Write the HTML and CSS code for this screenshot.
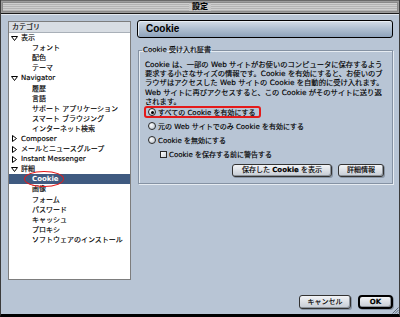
FILE: index.html
```html
<!DOCTYPE html>
<html lang="ja">
<head>
<meta charset="utf-8">
<title>設定</title>
<link rel="stylesheet" href="styles.css">
</head>
<body>
<div class="window">
  <div class="titlebar">
    <div class="stripes"><span class="title">設定</span></div>
  </div>
  <div class="main">
    <div class="tree">
      <div class="tree-head">カテゴリ</div>
      <ul class="tree-list">
        <li class="row l0"><svg class="tri" viewBox="0 0 7 7"><path d="M0.5 1.5 H6.5 L3.5 5.5 Z"/></svg>表示</li>
        <li class="row l1">フォント</li>
        <li class="row l1">配色</li>
        <li class="row l1">テーマ</li>
        <li class="row l0"><svg class="tri" viewBox="0 0 7 7"><path d="M0.5 1.5 H6.5 L3.5 5.5 Z"/></svg>Navigator</li>
        <li class="row l1">履歴</li>
        <li class="row l1">言語</li>
        <li class="row l1">サポート アプリケーション</li>
        <li class="row l1">スマート ブラウジング</li>
        <li class="row l1">インターネット検索</li>
        <li class="row l0"><svg class="tri" viewBox="0 0 7 7"><path d="M1.5 0.5 V6.5 L5.5 3.5 Z"/></svg>Composer</li>
        <li class="row l0"><svg class="tri" viewBox="0 0 7 7"><path d="M1.5 0.5 V6.5 L5.5 3.5 Z"/></svg>メールとニュースグループ</li>
        <li class="row l0"><svg class="tri" viewBox="0 0 7 7"><path d="M1.5 0.5 V6.5 L5.5 3.5 Z"/></svg>Instant Messenger</li>
        <li class="row l0"><svg class="tri" viewBox="0 0 7 7"><path d="M0.5 1.5 H6.5 L3.5 5.5 Z"/></svg>詳細</li>
        <li class="row l1 selected"><span class="sel-text">Cookie<span class="mark"></span></span></li>
        <li class="row l1">画像</li>
        <li class="row l1">フォーム</li>
        <li class="row l1">パスワード</li>
        <li class="row l1">キャッシュ</li>
        <li class="row l1">プロキシ</li>
        <li class="row l1">ソフトウェアのインストール</li>
      </ul>
    </div>
    <div class="pane">
      <div class="pane-header">Cookie</div>
      <fieldset class="group">
        <legend>Cookie 受け入れ証書</legend>
        <p class="desc">Cookie は、一部の Web サイトがお使いのコンピュータに保存するよう<br>要求する小さなサイズの情報です。Cookie を有効にすると、お使いのブ<br>ラウザはアクセスした Web サイトの Cookie を自動的に受け入れます。<br>Web サイトに再びアクセスすると、この Cookie がそのサイトに送り返<br>されます。</p>
        <div class="options">
          <div class="opt highlight"><span class="radio on"></span>すべての Cookie を有効にする</div>
          <div class="opt"><span class="radio"></span>元の Web サイトでのみ Cookie を有効にする</div>
          <div class="opt"><span class="radio"></span>Cookie を無効にする</div>
          <div class="opt sub"><span class="check"></span>Cookie を保存する前に警告する</div>
        </div>
        <div class="group-buttons">
          <button class="btn btn-show">保存した <b>Cookie</b> を表示</button>
          <button class="btn btn-info">詳細情報</button>
        </div>
      </fieldset>
    </div>
  </div>
  <div class="footer">
    <button class="btn btn-cancel">キャンセル</button>
    <button class="btn btn-ok">OK</button>
  </div>
  <svg class="grip" viewBox="0 0 8 8"><path d="M7.5 1.5 L1.5 7.5 M7.5 4 L4 7.5 M7.5 6.5 L6.5 7.5"/></svg>
</div>
</body>
</html>
```
FILE: styles.css
```css
* { box-sizing: border-box; }
html, body { margin: 0; padding: 0; background: #000; }
body {
  font-family: "DejaVu Sans", "Noto Sans CJK JP", sans-serif;
  font-size: 7px;
  color: #000;
  -webkit-text-stroke: 0.15px #000;
}
.window {
  position: relative;
  width: 400px;
  height: 317px;
  background: #b8c5d5;
  border-left: 1px solid #3b3b3b;
  border-right: 1px solid #3b3b3b;
  border-bottom: 3px solid #000;
  display: flex;
  flex-direction: column;
}
.titlebar {
  height: 14px;
  background: #9c9c9c;
  border-top: 1px solid #6a6a6a;
  border-bottom: 1px solid #1a1a1a;
  padding: 1px 1px;
}
.stripes {
  height: 10px;
  border: 1px solid #8a8a8a;
  background: repeating-linear-gradient(#cfcfcf 0, #cfcfcf 1px, #b4b4b4 1px, #b4b4b4 2px);
  display: flex;
  justify-content: center;
  align-items: center;
}
.title {
  background: #c8c8c8;
  padding: 0 3px;
  line-height: 8px;
  font-size: 8px;
  font-weight: bold;
}
.main {
  border-top: 1px solid #e2e8ef;
  padding: 6px 6px 0 7px;
  display: grid;
  grid-template-columns: 123px 1fr;
  column-gap: 6px;
  align-items: start;
}
.tree {
  height: 259px;
  background: #fff;
  border: 1px solid #7d7d7d;
}
.tree-head {
  height: 11px;
  line-height: 10px;
  background: #d8dde3;
  border-bottom: 1px solid #a9b0b8;
  padding-left: 3px;
  color: #000;
}
.tree-list {
  list-style: none;
  margin: 0;
  padding: 0;
}
.row {
  height: 10.1px;
  line-height: 10px;
  white-space: nowrap;
  display: flex;
  align-items: center;
}
.l0 { padding-left: 2px; }
.l1 { padding-left: 23px; }
.tri {
  width: 7px;
  height: 7px;
  margin-right: 3px;
  fill: #fff;
  stroke: #000;
  stroke-width: 1;
}
.selected {
  background: #3f5a80;
  color: #fff;
  font-weight: bold;
  -webkit-text-stroke: 0;
}
.sel-text { position: relative; }
.mark {
  position: absolute;
  left: -8px;
  right: -5px;
  top: -3px;
  bottom: -3px;
  border: 1.5px solid #e41a1a;
  border-radius: 50%;
}
.pane { margin-top: -1px; }
.pane-header {
  height: 18px;
  border: 1px solid #000;
  border-radius: 3px;
  background: linear-gradient(#d4dde7 0%, #b2c1d2 45%, #8ea3bb 100%);
  box-shadow: inset 1px 1px 0 #e8eef4;
  font-family: "Liberation Sans", sans-serif;
  font-size: 10px;
  font-weight: bold;
  line-height: 16px;
  padding-left: 8px;
  -webkit-text-stroke: 0;
}
.group {
  margin: 7px 0 0 1px;
  padding: 5px 8px 6px 5px;
  border: 1px solid #8592a3;
  box-shadow: 1px 1px 0 #e6ecf2, inset 1px 1px 0 #e6ecf2;
  min-width: 0;
}
.group legend {
  padding: 0 1px;
  margin-left: -2px;
  line-height: 10px;
  height: 10px;
}
.desc {
  margin: 0 0 0 1px;
  font-size: 7.3px;
  line-height: 9.2px;
  white-space: nowrap;
}
.options {
  display: flex;
  flex-direction: column;
  align-items: flex-start;
  gap: 2px;
}
.opt {
  height: 12px;
  display: flex;
  align-items: center;
  padding: 0 3px 0 2px;
  border: 2px solid transparent;
  border-radius: 3px;
  white-space: nowrap;
}
.opt.highlight { border-color: #e41a1a; }
.opt.sub { padding-left: 14px; }
.radio {
  width: 8px;
  height: 8px;
  border: 1px solid #2a2a2a;
  border-radius: 50%;
  background: radial-gradient(circle at 35% 35%, #fff, #c9d0d8 70%);
  margin-right: 2px;
  position: relative;
}
.radio.on::after {
  content: "";
  position: absolute;
  left: 1.5px;
  top: 1.5px;
  width: 3px;
  height: 3px;
  border-radius: 50%;
  background: #000;
}
.check {
  width: 7px;
  height: 7px;
  border: 1px solid #2a2a2a;
  background: linear-gradient(135deg, #fff, #c9d0d8);
  margin-right: 2px;
}
.group-buttons {
  margin-top: 4px;
  display: flex;
  justify-content: flex-end;
  gap: 6px;
}
.btn {
  height: 13px;
  padding: 0;
  font-family: inherit;
  font-size: 7px;
  line-height: 11px;
  color: #000;
  border: 1px solid #333;
  border-radius: 3px;
  background: linear-gradient(#f2f4f7, #c6ccd4);
  box-shadow: inset -1px -1px 0 #8d949c, 1px 1px 0 #8895a5;
  text-align: center;
}
.btn b { font-weight: bold; }
.btn-show { width: 100px; }
.btn-info { width: 46px; }
.footer {
  margin-top: 15px;
  padding-right: 6px;
  display: flex;
  justify-content: flex-end;
  gap: 7px;
}
.btn-cancel { width: 52px; height: 14px; }
.btn-ok {
  width: 35px;
  height: 14px;
  border: 2px solid #000;
  border-radius: 4px;
  font-weight: bold;
  line-height: 10px;
}
.grip {
  position: absolute;
  right: 0;
  bottom: 0;
  width: 8px;
  height: 8px;
  fill: none;
  stroke: #5a6676;
  stroke-width: 1;
  -webkit-text-stroke: 0;
}
```
